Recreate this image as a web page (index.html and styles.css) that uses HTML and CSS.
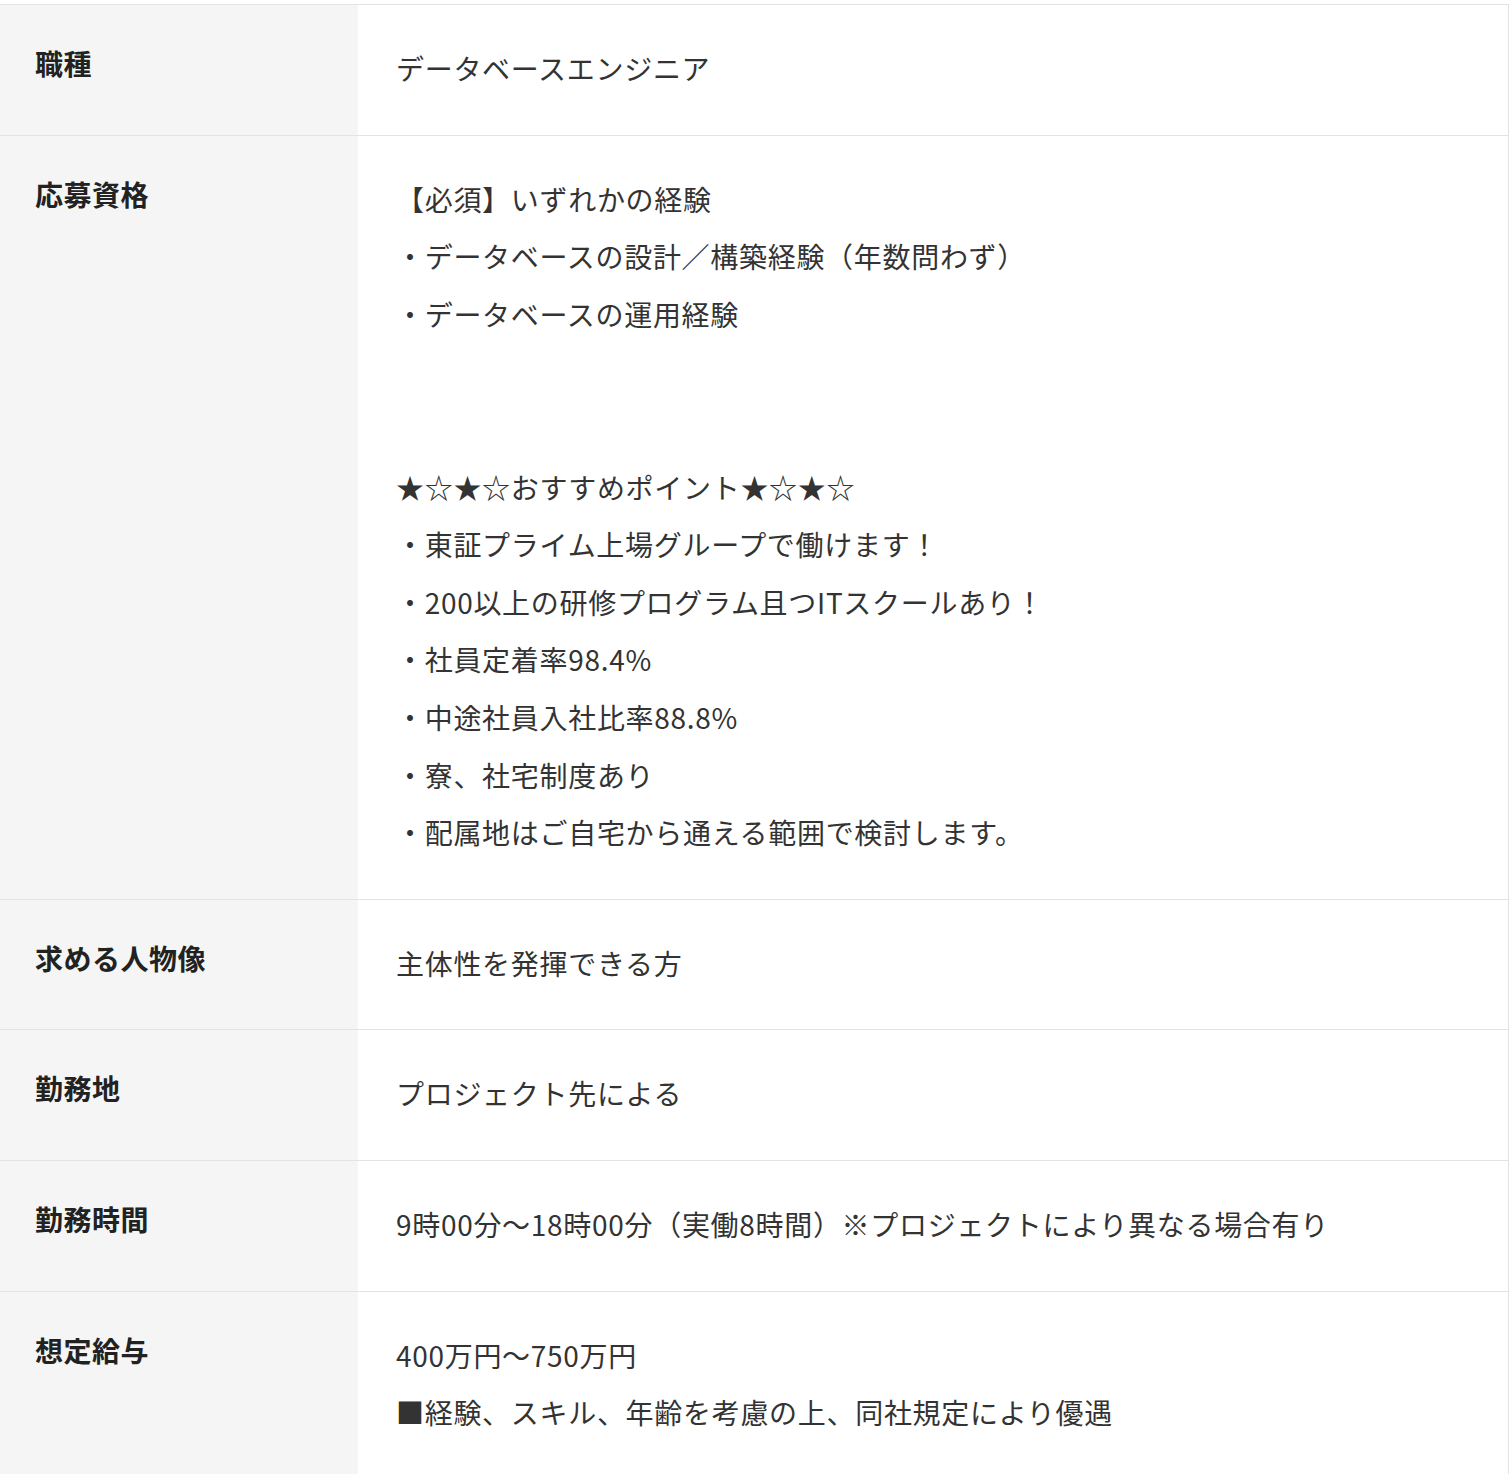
FILE: index.html
```html
<!DOCTYPE html>
<html lang="ja">
<head>
<meta charset="utf-8">
<link rel="stylesheet" href="styles.css">
</head>
<body>
<table class="spec">
  <tr>
    <th>職種</th>
    <td>データベースエンジニア</td>
  </tr>
  <tr>
    <th>応募資格</th>
    <td>【必須】いずれかの経験<br>・データベースの設計／構築経験（年数問わず）<br>・データベースの運用経験<br><br><br>★☆★☆おすすめポイント★☆★☆<br>・東証プライム上場グループで働けます！<br>・200以上の研修プログラム且つITスクールあり！<br>・社員定着率98.4%<br>・中途社員入社比率88.8%<br>・寮、社宅制度あり<br>・配属地はご自宅から通える範囲で検討します。</td>
  </tr>
  <tr>
    <th>求める人物像</th>
    <td>主体性を発揮できる方</td>
  </tr>
  <tr>
    <th>勤務地</th>
    <td>プロジェクト先による</td>
  </tr>
  <tr>
    <th>勤務時間</th>
    <td>9時00分〜18時00分（実働8時間）※プロジェクトにより異なる場合有り</td>
  </tr>
  <tr>
    <th>想定給与</th>
    <td>400万円〜750万円<br>■経験、スキル、年齢を考慮の上、同社規定により優遇</td>
  </tr>
</table>
</body>
</html>
```

FILE: styles.css
```css
html, body {
  margin: 0;
  padding: 0;
  background: #ffffff;
}

body {
  padding-top: 4px;
  font-family: "Noto Sans CJK JP", "Noto Sans", sans-serif;
  color: #333333;
}

.spec {
  width: 1509px;
  border-collapse: collapse;
  border-top: 1px solid #e3e3e3;
  border-right: 1px solid #e3e3e3;
}

.spec tr {
  border-bottom: 1px solid #e3e3e3;
}

.spec th {
  width: 358px;
  box-sizing: border-box;
  background: #f4f5f4;
  text-align: left;
  vertical-align: top;
  padding: 34px 20px 38px 35px;
  font-size: 28px;
  line-height: 48px;
  font-weight: 700;
  letter-spacing: 0.5px;
  color: #222222;
}

.spec td {
  vertical-align: top;
  padding: 35px 20px 37px 38px;
  font-size: 28px;
  line-height: 57.6px;
  font-weight: 400;
  letter-spacing: 0.7px;
  color: #333333;
}
```
